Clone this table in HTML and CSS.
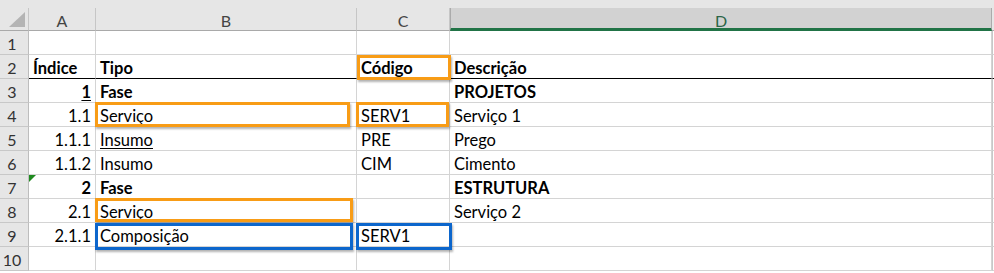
FILE: index.html
```html
<!DOCTYPE html>
<html lang="pt">
<head>
<meta charset="utf-8">
<link rel="stylesheet" href="styles.css">
</head>
<body>
<div class="app">
  <div class="topstrip"></div>
  <div class="sheet">
    <div class="grid">
      <div class="corner"><span class="tri"></span></div>
      <div class="colhdr">A</div>
      <div class="colhdr">B</div>
      <div class="colhdr">C</div>
      <div class="colhdr sel">D</div>
      <div class="colhdr end"></div>

      <div class="rowhdr">1</div><div class="c"></div><div class="c"></div><div class="c"></div><div class="c"></div><div class="c end"></div>

      <div class="rowhdr">2</div><div class="c b thick">Índice</div><div class="c b thick">Tipo</div><div class="c b thick">Código</div><div class="c b thick">Descrição</div><div class="c end thick"></div>

      <div class="rowhdr">3</div><div class="c num b"><u>1</u></div><div class="c b">Fase</div><div class="c"></div><div class="c b">PROJETOS</div><div class="c end"></div>

      <div class="rowhdr">4</div><div class="c num">1.1</div><div class="c">Serviço</div><div class="c">SERV1</div><div class="c">Serviço 1</div><div class="c end"></div>

      <div class="rowhdr">5</div><div class="c num">1.1.1</div><div class="c"><u>Insumo</u></div><div class="c">PRE</div><div class="c">Prego</div><div class="c end"></div>

      <div class="rowhdr">6</div><div class="c num">1.1.2</div><div class="c">Insumo</div><div class="c">CIM</div><div class="c">Cimento</div><div class="c end"></div>

      <div class="rowhdr">7</div><div class="c num b flag">2</div><div class="c b">Fase</div><div class="c"></div><div class="c b">ESTRUTURA</div><div class="c end"></div>

      <div class="rowhdr">8</div><div class="c num">2.1</div><div class="c">Serviço</div><div class="c"></div><div class="c">Serviço 2</div><div class="c end"></div>

      <div class="rowhdr">9</div><div class="c num">2.1.1</div><div class="c">Composição</div><div class="c">SERV1</div><div class="c"></div><div class="c end"></div>

      <div class="rowhdr">10</div><div class="c"></div><div class="c"></div><div class="c"></div><div class="c"></div><div class="c end"></div>
    </div>

    <div class="mark orange" style="left:357px;top:47px;width:94px;height:25px"></div>
    <div class="mark orange" style="left:95px;top:94px;width:255px;height:25px"></div>
    <div class="mark orange" style="left:356px;top:94px;width:93px;height:25px"></div>
    <div class="mark orange" style="left:95px;top:190px;width:258px;height:24px"></div>
    <div class="mark blue" style="left:95px;top:215px;width:258px;height:27px"></div>
    <div class="mark blue" style="left:356px;top:215px;width:96px;height:27px"></div>
  </div>
</div>
</body>
</html>
```

FILE: styles.css
```css
html, body {
  margin: 0;
  padding: 0;
  background: #ffffff;
  overflow: hidden;
}

.app {
  width: 994px;
  height: 273px;
  background: #ffffff;
  font-family: Lato, "Liberation Sans", sans-serif;
}

.topstrip {
  height: 8px;
  background: #e6e6e6;
}

.sheet {
  position: relative;
}

.grid {
  display: grid;
  grid-template-columns: 29px 67px 261px 93px 542px 2px;
  grid-template-rows: 23px repeat(10, 24px);
}

.grid > div {
  box-sizing: border-box;
}

.corner {
  background: #e6e6e6;
  border-right: 1px solid #c6c6c6;
  border-bottom: 1px solid #a9a9a9;
  position: relative;
}

.tri {
  position: absolute;
  left: 9px;
  top: 4px;
  width: 0;
  height: 0;
  border-left: 16px solid transparent;
  border-bottom: 15px solid #b4b4b4;
}

.colhdr {
  background: #e6e6e6;
  border-right: 1px solid #c6c6c6;
  border-bottom: 1px solid #a9a9a9;
  color: #444444;
  font-size: 16px;
  display: flex;
  align-items: center;
  justify-content: center;
  padding-top: 2px;
}

.colhdr.sel {
  background: #d2d2d2;
  color: #2a6446;
  border-left: 1px solid #ababab;
  border-right: 1px solid #ababab;
  border-bottom: 3px solid #217346;
  padding-top: 4px;
}

.colhdr.end {
  border-right: none;
  background: #e6e6e6;
}

.rowhdr {
  background: #e6e6e6;
  border-right: 1px solid #bdbdbd;
  border-bottom: 1px solid #c8c8c8;
  color: #333333;
  font-size: 16px;
  display: flex;
  align-items: center;
  justify-content: center;
  padding-right: 4px;
  padding-top: 1px;
}

.c {
  border-right: 1px solid #d4d4d4;
  border-bottom: 1px solid #d4d4d4;
  font-size: 16.5px;
  color: #000000;
  display: flex;
  align-items: center;
  padding: 3px 4px 0 4px;
  white-space: nowrap;
  position: relative;
}

.c.b {
  font-weight: 700;
}

.c.num {
  justify-content: flex-end;
  padding-right: 4px;
}

.c.thick {
  border-bottom: 1px solid #000000;
}

.c.end {
  border-right: none;
  border-left: 1px solid #c8c8c8;
  padding: 0;
}

.c u {
  text-decoration: underline;
  text-underline-offset: 2px;
}

.flag::before {
  content: "";
  position: absolute;
  left: 0;
  top: 0;
  width: 0;
  height: 0;
  border-top: 7px solid #1f8a1f;
  border-right: 7px solid transparent;
}

.mark {
  position: absolute;
  box-sizing: border-box;
  border: 3px solid;
  box-shadow: 1px 2px 2px rgba(0, 0, 0, 0.3);
}

.mark.orange {
  border-color: #f89c16;
}

.mark.blue {
  border-color: #0c66cc;
}
```
